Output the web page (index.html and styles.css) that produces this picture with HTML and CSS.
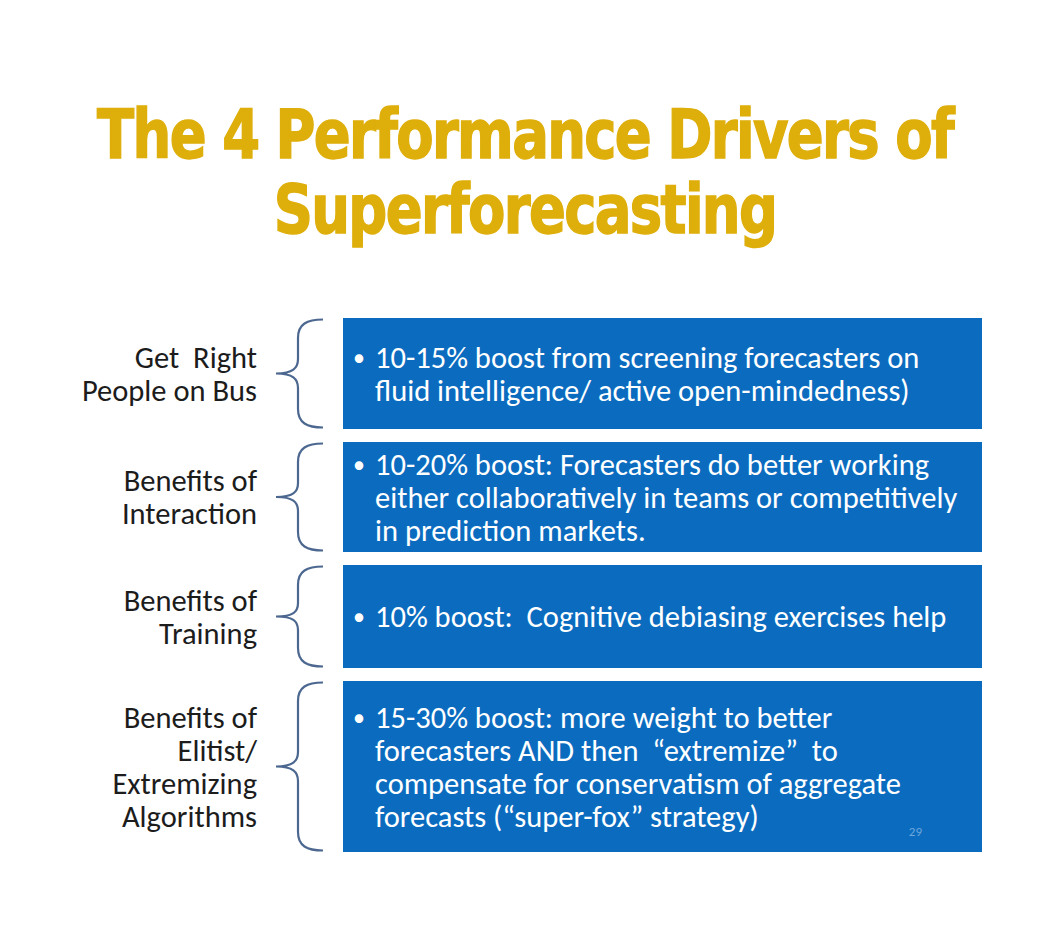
FILE: index.html
```html
<!DOCTYPE html>
<html>
<head>
<meta charset="utf-8">
<link rel="stylesheet" href="styles.css">
</head>
<body>
<div class="slide">
  <h1 class="title">The 4 Performance Drivers of<br>Superforecasting</h1>
  <div class="rows">
    <div class="row r1">
      <div class="label">Get&nbsp; Right<br>People on Bus</div>
      <div class="brace"><svg width="52" height="111" viewBox="0 0 52 111"><path d="M50,1.5 C34,1.5 25,6 25,20 L25,41 C25,50 20,55.5 3,55.5 C20,55.5 25,61 25,70 L25,91 C25,105 34,109.5 50,109.5"/></svg></div>
      <div class="box"><p>10-15% boost from screening forecasters on fluid intelligence/ active open-mindedness)</p></div>
    </div>
    <div class="row r2">
      <div class="label">Benefits of<br>Interaction</div>
      <div class="brace"><svg width="52" height="110" viewBox="0 0 52 110"><path d="M50,1.5 C34,1.5 25,6 25,20 L25,41 C25,50 20,55 3,55 C20,55 25,60 25,69 L25,90 C25,104 34,108.5 50,108.5"/></svg></div>
      <div class="box"><p>10-20% boost: Forecasters do better working either collaboratively in teams or competitively in prediction markets.</p></div>
    </div>
    <div class="row r3">
      <div class="label">Benefits of<br>Training</div>
      <div class="brace"><svg width="52" height="103" viewBox="0 0 52 103"><path d="M50,1.5 C34,1.5 25,6 25,20 L25,38 C25,47 20,51.5 3,51.5 C20,51.5 25,56 25,65 L25,83 C25,97 34,101.5 50,101.5"/></svg></div>
      <div class="box"><p>10% boost:&nbsp; Cognitive debiasing exercises help</p></div>
    </div>
    <div class="row r4">
      <div class="label">Benefits of<br>Elitist/<br>Extremizing<br>Algorithms</div>
      <div class="brace"><svg width="52" height="171" viewBox="0 0 52 171"><path d="M50,1.5 C34,1.5 25,6 25,20 L25,71 C25,80 20,85.5 3,85.5 C20,85.5 25,91 25,100 L25,151 C25,165 34,169.5 50,169.5"/></svg></div>
      <div class="box"><p>15-30% boost: more weight to better forecasters AND then &nbsp;“extremize” &nbsp;to compensate for conservatism of aggregate forecasts (“super-fox” strategy)</p><span class="pagenum">29</span></div>
    </div>
  </div>
</div>
</body>
</html>
```

FILE: styles.css
```css
html, body {
  margin: 0;
  padding: 0;
  background: #ffffff;
}

.slide {
  width: 1050px;
  height: 939px;
  padding-top: 97px;
  box-sizing: border-box;
}

.title {
  margin: 0;
  text-align: center;
  font-family: "DejaVu Sans Condensed", "DejaVu Sans", sans-serif;
  font-stretch: condensed;
  font-weight: 700;
  font-size: 68px;
  line-height: 75px;
  letter-spacing: -1.9px;
  color: #deae0b;
  -webkit-text-stroke: 1.4px #deae0b;
  transform: scaleX(0.89);
}

.rows {
  margin-top: 71px;
  display: flex;
  flex-direction: column;
  gap: 13px;
}

.row {
  display: grid;
  grid-template-columns: 257px 86px 639px;
  font-family: "Carlito", "Lato", sans-serif;
  font-size: 30.5px;
  line-height: 33px;
}

.r1 { height: 111px; }
.r2 { height: 110px; }
.r3 { height: 103px; }
.r4 { height: 171px; }

.label {
  align-self: center;
  text-align: right;
  color: #1c1c1c;
}

.brace {
  padding-left: 16px;
}

.brace svg {
  display: block;
}

.brace path {
  fill: none;
  stroke: #4d6890;
  stroke-width: 2.2;
}

.box {
  position: relative;
  background: #0b6cbf;
  color: #ffffff;
  display: flex;
  align-items: center;
  padding: 0 10px 0 32px;
}

.box p {
  margin: 0;
}

.box p::before {
  content: "•";
  display: inline-block;
  width: 22px;
  margin-left: -22px;
  font-size: 24px;
  vertical-align: 2px;
}

.pagenum {
  position: absolute;
  right: 60px;
  bottom: 13px;
  font-size: 13px;
  line-height: 14px;
  color: #6ea6dc;
}
```
